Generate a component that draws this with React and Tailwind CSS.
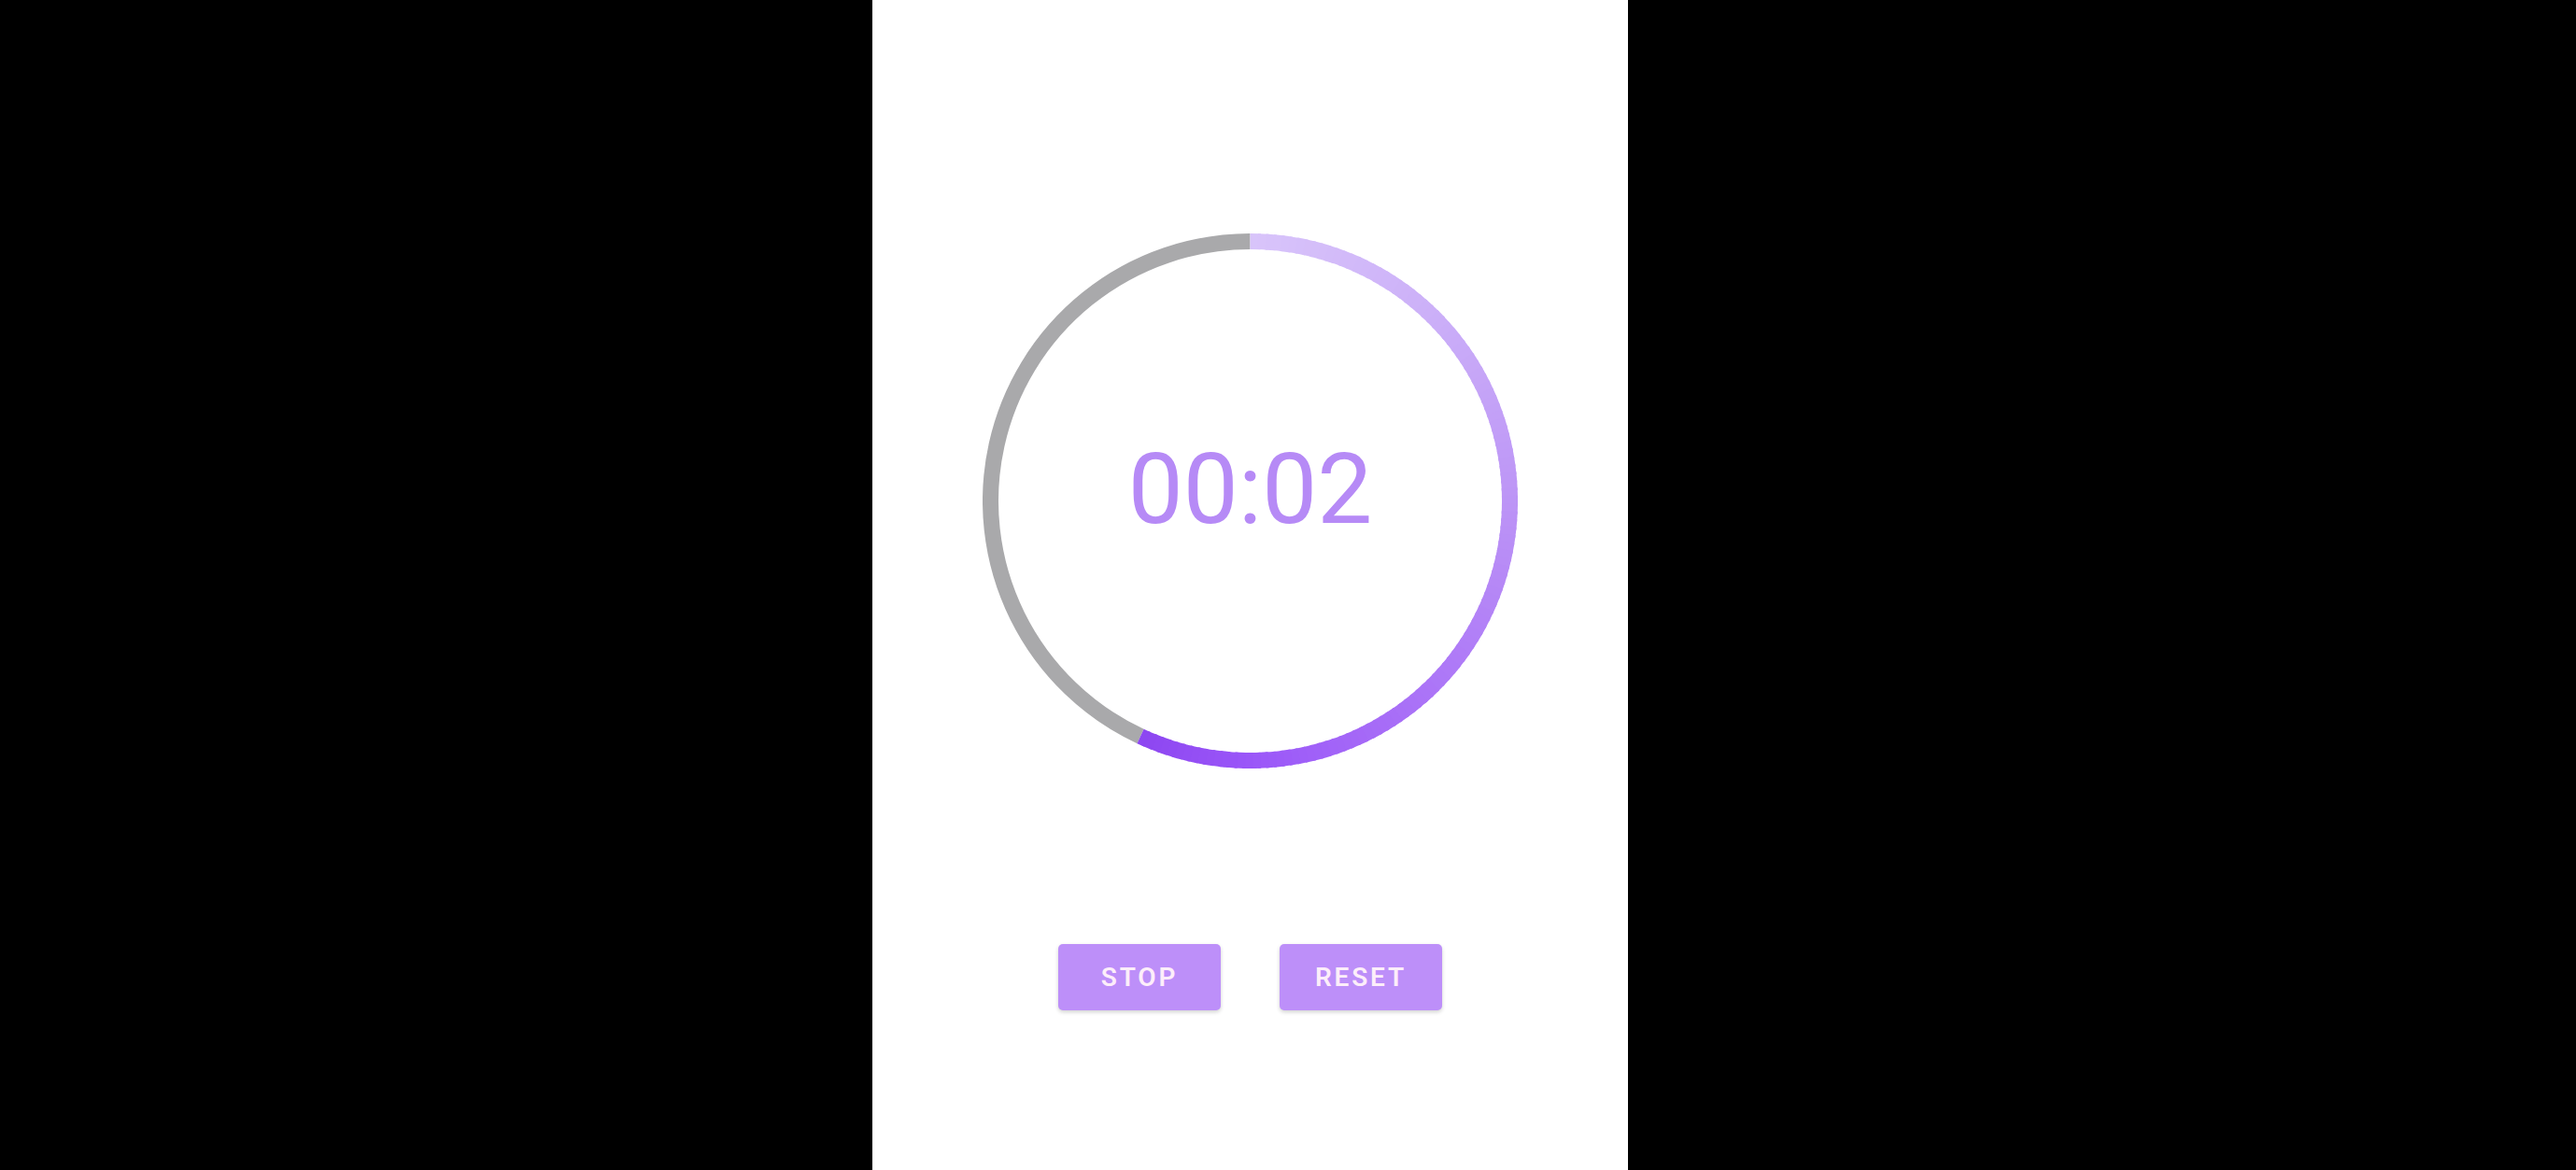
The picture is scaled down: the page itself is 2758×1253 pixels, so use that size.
import React from "react";

// colour stops along the progress arc, by degrees from 12 o'clock
const stops = [
  [0, [216, 196, 250]],
  [45, [203, 175, 248]],
  [90, [188, 148, 246]],
  [140, [170, 114, 247]],
  [180, [154, 86, 248]],
  [205, [140, 70, 240]],
];

function colorAt(deg) {
  for (let i = 0; i < stops.length - 1; i++) {
    const [a, ca] = stops[i];
    const [b, cb] = stops[i + 1];
    if (deg >= a && deg <= b) {
      const t = (deg - a) / (b - a);
      const c = ca.map((v, k) => Math.round(v + (cb[k] - v) * t));
      return `rgb(${c[0]},${c[1]},${c[2]})`;
    }
  }
  const c = stops[stops.length - 1][1];
  return `rgb(${c[0]},${c[1]},${c[2]})`;
}

function point(cx, cy, r, deg) {
  const rad = ((deg - 90) * Math.PI) / 180;
  return [cx + r * Math.cos(rad), cy + r * Math.sin(rad)];
}

function arc(cx, cy, r, from, to) {
  const [x1, y1] = point(cx, cy, r, from);
  const [x2, y2] = point(cx, cy, r, to);
  const large = to - from > 180 ? 1 : 0;
  return `M ${x1} ${y1} A ${r} ${r} 0 ${large} 1 ${x2} ${y2}`;
}

function Ring({ progress = 205 }) {
  const size = 573;
  const c = size / 2;
  const r = 278;
  const n = 120;
  const segs = [];
  for (let i = 0; i < n; i++) {
    const a = (progress * i) / n;
    const b = Math.min(progress, (progress * (i + 1)) / n + 0.6);
    segs.push(
      <path key={i} d={arc(c, c, r, a, b)} stroke={colorAt(a)} strokeWidth="17" fill="none" />
    );
  }
  return (
    <svg width={size} height={size} viewBox={`0 0 ${size} ${size}`} className="absolute inset-0">
      <path d={arc(c, c, r, progress, 360)} stroke="#a9a9ab" strokeWidth="17" fill="none" />
      {segs}
    </svg>
  );
}

function Btn({ children }) {
  return (
    <button
      type="button"
      className="flex h-[71px] w-[174px] items-center justify-center rounded-[5px] bg-[#bd8ff9] text-[28px] font-semibold tracking-[0.1em] text-[#fdeefa] shadow-[0_2px_4px_rgba(0,0,0,0.18)]"
    >
      {children}
    </button>
  );
}

export default function App() {
  return (
    <div className="flex h-[1253px] w-full bg-black pl-[934px]" style={{ fontFamily: "Roboto, 'Liberation Sans', sans-serif" }}>
      <div className="flex w-[809px] flex-col items-center bg-white pt-[250px]">
        <div className="relative h-[573px] w-[573px]">
          <Ring />
          <div className="absolute inset-0 flex items-center justify-center pb-[24px]">
            <span className="text-[105px] leading-none text-[#b68af6]">00:02</span>
          </div>
        </div>
        <div className="mt-[188px] flex gap-[63px]">
          <Btn>STOP</Btn>
          <Btn>RESET</Btn>
        </div>
      </div>
    </div>
  );
}
